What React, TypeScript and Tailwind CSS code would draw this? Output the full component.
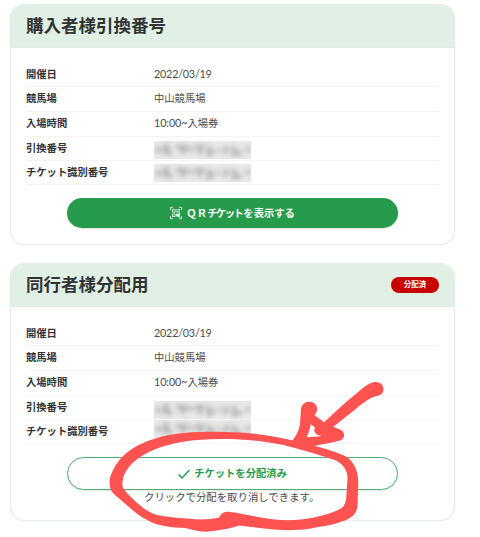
import React from "react";

const font = "font-['Lato','Noto_Sans_CJK_JP',sans-serif]";

function Redacted({ className }: { className: string }) {
  return (
    <svg className={`block w-[97px] shrink-0 ${className}`} viewBox="0 0 97 18" preserveAspectRatio="none">
      <rect width="97" height="18" fill="#e9e9e9" />
      <g fill="none" stroke="#b0b0b0" strokeWidth="4" style={{ filter: "blur(2.4px)" }}>
        <path d="M4 6v6M9 6l4-1v6l5 2M9 12l5-4M22 6h9l-3 7M34 8h5M41 6h7l-3 7M55 5v8l5-3M63 9h3M73 5l-2 8M80 5v8l8-1M94 6v5" />
      </g>
    </svg>
  );
}

function Row({ label, height, children }: { label: string; height: string; children: React.ReactNode }) {
  return (
    <div className={`flex items-center border-b border-[#f4f4f4] ${height}`}>
      <div className="w-[128px] shrink-0 text-[10.3px] font-bold text-[#333]">{label}</div>
      <div className="flex items-center text-[10.3px] text-[#4c4c4c]">{children}</div>
    </div>
  );
}

function Details({ shift }: { shift: boolean }) {
  return (
    <div className="mx-[15px] leading-none">
      <Row label="開催日" height="h-[25px]"><span className="text-[10.8px] tracking-[-0.22px]">2022/03/19</span></Row>
      <Row label="競馬場" height="h-[25px] pb-[2px]">中山競馬場</Row>
      <Row label="入場時間" height="h-[25px] pb-[2px]"><span className="text-[10.8px] tracking-[-0.1px]">10:00~</span>入場券</Row>
      <Row label="引換番号" height="h-[24px]"><Redacted className={shift ? "mt-[4px] -mb-px h-[18px]" : "mt-[2px] h-[18px]"} /></Row>
      <Row label="チケット識別番号" height="h-[24px]"><Redacted className={shift ? "-mt-[6px] h-[18px]" : "h-[18px]"} /></Row>
    </div>
  );
}

function QrIcon() {
  return (
    <svg className="h-3 w-3" viewBox="0 0 12 12" fill="none" stroke="white" strokeWidth="0.8">
      <path d="M.5 3V.5H3M9 .5h2.5V3M.5 9v2.5H3M9 11.5h2.5V9" />
      <path d="M2.5 2.5h2.6v2.6H2.5zM6.9 2.5h2.6v2.6H6.9zM2.5 6.9h2.6v2.6H2.5zM6.5 6.5v3M8.5 6.3h1.8M8 9.8h2" />
      <path d="M7.4 7.2h2v2h-2z" fill="white" />
    </svg>
  );
}

function Annotation() {
  return (
    <svg className="pointer-events-none absolute left-0 top-0 h-[537px] w-[480px]" viewBox="0 0 480 537" fill="#ff5352">
      <path
        fillRule="evenodd"
        d="M240 432.5C258 433.5 277 437 293 440.5C310 444 332 450 346 456.5C355 462 358.5 473 358.3 483L357.5 506C357 514 351 518 345 520.5C336 524 327 526 318 527C303 530.5 284 531 270 529C258 528 248 526.5 239 525.5C232 528 218 531 206 531.7C198 532 191 529 185 528C173 527.5 158 526 149 521C136 515 125 503 115 495C108 489 109 480 111 475C115 464 121 457 129 451C141 442 158 437 172 434.5C192 431 220 431.5 240 432.5Z
        M240 439.5C220 438.5 199 439 182 442C166 444.5 151 450 140 457C130 464 123 473 122.5 482C121.5 488 125 491 131 497C139 505 147 512 157 515C169 517.5 181 518 190 518.8C200 520 211 519.5 219 517.5C221 513 225 511 230 512C238 513 248 515 258 517C272 520 287 521 301 519.5C315 518 331 514 340 509C345 507 346.5 500 346.5 493L347.5 479C348 471 343 464 336 460.5C322 456 308 451 293 447.5C276 443 258 440.5 240 439.5Z"
      />
      <path
        fillRule="evenodd"
        d="M292.3 441C297 434 299 430 300 424L301 409.5C301 405 305 401.7 309.2 401.7C314 401.7 317.3 405 317.2 409.5C317 412 315.5 413 314.5 415L324 422.3C330 417 337 410 345 403L361.7 389C367 385 370 383 373.5 382.3C379 381 383.5 384 383.5 389.3C383.3 393.5 380.5 395.5 376.7 396C372 397 369 399 365 401.7C360 405 356 409 351.7 412.3L333.3 426.7L341 430C343.5 431.5 344.3 433.5 344 436C343.5 439 341.5 440 339 440.8C331 443 323 444 314.3 446L309 449Z
        M310.7 424.3C310 429 308.5 433.5 306.7 437.3L318.3 436.5L328 435C323 435.6 320 436.2 317.8 435C315.2 433.5 314 431.5 314.2 429.7L315 427.5Z"
      />
    </svg>
  );
}

export default function App() {
  return (
    <main className={`relative h-[537px] w-[480px] overflow-hidden bg-white pl-[10px] pt-1 ${font}`}>
      <section className="h-[241px] w-[445px] overflow-hidden rounded-[14px] border border-[#e2ebe6] shadow-[0_0_1px_#dae8df]">
        <header className="flex h-[43px] items-center border-b border-[#dcebe1] bg-[#e1f0e5] px-[15px]">
          <h1 className="text-[17.5px] font-bold leading-none text-[#333]">購入者様引換番号</h1>
        </header>
        <div className="pt-[14px]"><Details shift={false} /></div>
        <button className="ml-14 mt-[13px] flex h-[30px] w-[331px] items-center justify-center rounded-full bg-[#269b4c] text-[10.3px] font-bold leading-none text-white shadow-[0_1px_2px_#ddd]">
          <QrIcon />
          <span className="ml-[4px] tracking-[0.2px]">ＱＲ</span>
          <span className="tracking-[-1.5px]">チケット</span>
          <span className="ml-[1px]">を表示する</span>
        </button>
      </section>

      <section className="mt-[18px] h-[258px] w-[445px] overflow-hidden rounded-[14px] border border-[#e2ebe6] shadow-[0_0_1px_#dae8df]">
        <header className="flex h-[43px] items-center justify-between border-b border-[#dcebe1] bg-[#e1f0e5] px-[15px]">
          <h2 className="text-[17.5px] font-bold leading-none text-[#333]">同行者様分配用</h2>
          <span className="flex h-4 w-12 items-center justify-center rounded-full bg-[#c70000] text-[7.5px] font-bold leading-none text-white">分配済</span>
        </header>
        <div className="pt-[14px]"><Details shift /></div>
        <button className="ml-14 mt-[13px] flex h-[33px] w-[331px] items-center justify-center rounded-full border-[1.5px] border-[#4db06e] bg-white text-[10.3px] font-bold leading-none text-[#269b4c] shadow-[0_1px_2px_#e5e5e5]">
          <svg className="mr-1 h-3 w-3" viewBox="0 0 12 12" fill="none" stroke="currentColor" strokeWidth="1.5">
            <path d="M.5 6.5 4 10 11.5 2" />
          </svg>
          チケットを分配済み
        </button>
        <p className="ml-[133px] mt-[2px] whitespace-nowrap text-[10.4px] leading-[11px] text-[#4c4c4c]">クリックで分配を取り消しできます。</p>
      </section>
      <Annotation />
    </main>
  );
}
